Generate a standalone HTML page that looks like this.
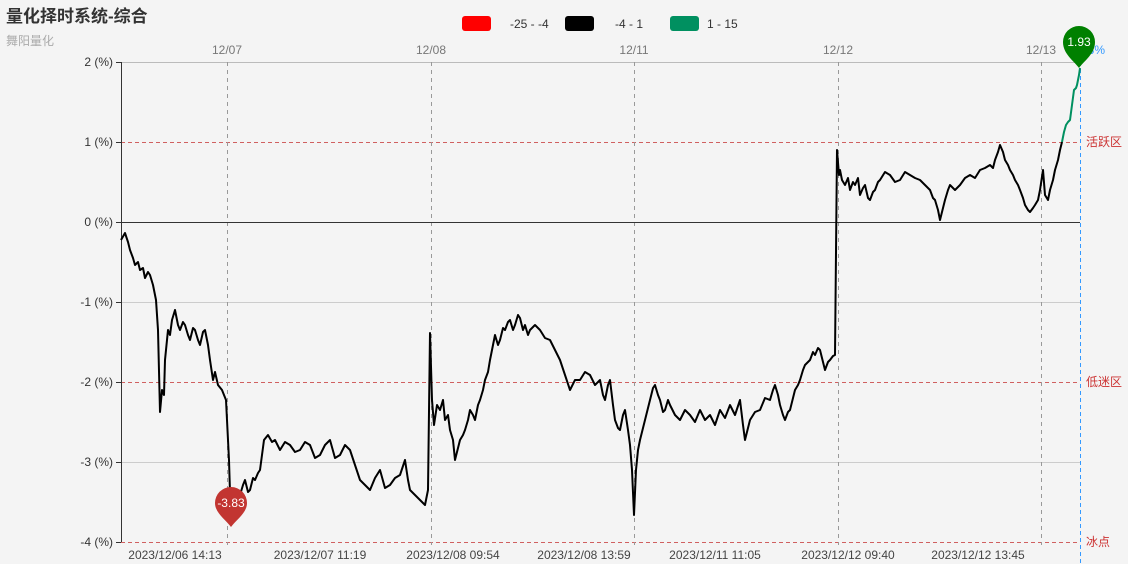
<!DOCTYPE html>
<html><head><meta charset="utf-8"><style>
body{margin:0;background:#fff;}
svg{display:block;font-family:"Liberation Sans","Noto Sans CJK SC",sans-serif;}
</style></head><body>
<svg width="1128" height="578" viewBox="0 0 1128 578">
<rect x="0" y="0" width="1128" height="564" fill="#f4f4f4"/>
<text x="6" y="22" font-size="17" font-weight="bold" fill="#333">量化择时系统-综合</text>
<text x="6" y="45" font-size="12" fill="#aaa">舞阳量化</text>
<rect x="462" y="16" width="29" height="15" rx="3" fill="#f00"/>
<text x="510" y="28" font-size="12" fill="#333">-25 - -4</text>
<rect x="565" y="16" width="29" height="15" rx="3" fill="#000"/>
<text x="615" y="28" font-size="12" fill="#333">-4 - 1</text>
<rect x="670" y="16" width="29" height="15" rx="3" fill="#009060"/>
<text x="707" y="28" font-size="12" fill="#333">1 - 15</text>
<g stroke="#ccc" stroke-width="1">
<line x1="121" y1="62.5" x2="1080" y2="62.5" stroke="#bbb"/>
<line x1="121" y1="302.5" x2="1080" y2="302.5"/>
<line x1="121" y1="462.5" x2="1080" y2="462.5"/>
</g>
<g stroke="#d06060" stroke-width="1" stroke-dasharray="4,3">
<line x1="121" y1="142.5" x2="1080" y2="142.5"/>
<line x1="121" y1="382.5" x2="1080" y2="382.5"/>
<line x1="121" y1="542.5" x2="1080" y2="542.5"/>
</g>
<g stroke="#999" stroke-width="1" stroke-dasharray="4,4">
<line x1="227.5" y1="62" x2="227.5" y2="545"/>
<line x1="431.5" y1="62" x2="431.5" y2="545"/>
<line x1="634.5" y1="62" x2="634.5" y2="545"/>
<line x1="838.5" y1="62" x2="838.5" y2="545"/>
<line x1="1041.5" y1="62" x2="1041.5" y2="545"/>
</g>
<line x1="1080.5" y1="62" x2="1080.5" y2="564" stroke="#3399ff" stroke-dasharray="4,3"/>
<line x1="121" y1="222.5" x2="1080" y2="222.5" stroke="#333"/>
<line x1="121.5" y1="62" x2="121.5" y2="542" stroke="#333"/>
<g stroke="#333"><line x1="116" y1="62.5" x2="121" y2="62.5"/><line x1="116" y1="142.5" x2="121" y2="142.5"/><line x1="116" y1="222.5" x2="121" y2="222.5"/><line x1="116" y1="302.5" x2="121" y2="302.5"/><line x1="116" y1="382.5" x2="121" y2="382.5"/><line x1="116" y1="462.5" x2="121" y2="462.5"/><line x1="116" y1="542.5" x2="121" y2="542.5"/></g>
<g font-size="12" fill="#333" text-anchor="end">
<text x="113" y="66">2 (%)</text><text x="113" y="146">1 (%)</text><text x="113" y="226">0 (%)</text>
<text x="113" y="306">-1 (%)</text><text x="113" y="386">-2 (%)</text><text x="113" y="466">-3 (%)</text><text x="113" y="546">-4 (%)</text>
</g>
<g font-size="12" fill="#c33">
<text x="1086" y="146">活跃区</text><text x="1086" y="386">低迷区</text><text x="1086" y="546">冰点</text>
</g>
<g font-size="12" fill="#777" text-anchor="middle">
<text x="227" y="54">12/07</text><text x="431" y="54">12/08</text><text x="634" y="54">12/11</text><text x="838" y="54">12/12</text><text x="1041" y="54">12/13</text>
</g>
<text x="1088" y="54" font-size="12" fill="#3399ff" text-anchor="middle">1.93%</text>
<g font-size="12" fill="#444" text-anchor="middle">
<text x="175" y="559">2023/12/06 14:13</text><text x="320" y="559">2023/12/07 11:19</text><text x="453" y="559">2023/12/08 09:54</text>
<text x="584" y="559">2023/12/08 13:59</text><text x="715" y="559">2023/12/11 11:05</text><text x="848" y="559">2023/12/12 09:40</text><text x="978" y="559">2023/12/12 13:45</text>
</g>
<polyline fill="none" stroke="#000" stroke-width="2" stroke-linejoin="round" points="121,240 125,233 128,242 130,250 133,258 135,265 138,262 140,270 143,268 145,278 148,272 150,275 153,285 156,300 158,330 160,412 162,390 164,395 165,360 168,330 170,335 172,320 175,310 178,325 180,330 183,322 185,325 188,335 190,340 193,328 195,330 198,340 200,345 203,332 205,330 208,345 210,360 213,380 215,372 218,385 222,390 226,400 229,460 231,525 234,515 237,500 240,495 243,485 245,480 248,492 250,490 253,478 255,480 258,473 260,470 264,440 268,435 272,442 275,440 278,446 280,450 285,442 290,445 295,452 300,450 305,442 310,445 315,458 320,455 325,445 330,440 335,458 340,455 345,445 350,450 355,465 360,480 365,485 370,490 375,478 380,470 385,488 390,485 395,478 400,475 405,460 408,480 410,490 415,495 420,500 425,505 428,490 430,333 432,400 434,425 437,405 440,410 443,400 445,420 448,415 450,430 453,440 455,460 458,448 460,440 463,435 465,430 468,420 470,410 473,415 475,420 478,405 480,400 483,390 485,380 488,372 490,360 493,345 495,335 498,345 500,340 503,328 505,330 508,322 510,320 513,330 515,325 518,315 520,318 523,330 525,325 528,335 530,330 535,325 540,330 545,338 550,340 555,350 560,360 565,375 570,390 575,380 580,380 585,372 590,375 595,385 600,380 603,395 605,400 608,385 610,380 613,405 615,420 618,428 620,430 623,415 625,410 628,430 630,445 632,470 634,515 636,470 638,450 640,440 643,428 645,420 648,408 650,400 653,388 655,385 658,395 660,400 663,412 665,410 668,400 670,405 675,415 680,420 685,410 690,415 695,422 700,410 705,420 710,415 715,425 720,410 725,418 730,405 735,415 740,400 743,425 745,440 748,428 750,420 755,412 760,410 765,398 770,400 773,390 775,385 778,395 780,405 783,415 785,420 788,412 790,410 793,398 795,390 798,385 800,380 803,370 805,365 808,362 810,360 813,352 815,355 818,348 820,350 823,362 825,370 828,362 830,360 833,356 835,355 837,150 839,175 840,170 842,180 845,185 848,178 850,190 853,182 855,185 858,178 860,195 863,188 865,185 868,198 870,200 873,192 875,190 878,182 880,180 885,172 890,175 895,182 900,180 905,172 910,175 915,178 920,180 925,185 930,190 933,198 935,200 938,210 940,220 943,208 945,200 948,190 950,185 955,190 960,185 965,178 970,175 975,178 980,170 985,168 990,165 993,168 995,160 998,152 1000,145 1003,152 1005,160 1008,165 1010,170 1013,175 1015,180 1018,185 1020,190 1023,198 1025,205 1028,210 1030,212 1033,208 1035,205 1038,200 1040,190 1043,170 1045,195 1048,200 1050,190 1053,180 1055,170 1058,160 1060,150 1062,142"/>
<polyline fill="none" stroke="#009060" stroke-width="2" stroke-linejoin="round" points="1062,142 1064,132 1066,125 1068,122 1070,120 1072,105 1074,90 1076,88 1077,85 1079,75 1080,68"/>
<path d="M231,527 C226,520 215,513 215,503 A16,16 0 1 1 247,503 C247,513 236,520 231,527 Z" fill="#c23531"/>
<text x="231" y="507" font-size="12" fill="#fff" text-anchor="middle">-3.83</text>
<path d="M1079,68 C1074,61 1063,54 1063,42 A16,16 0 1 1 1095,42 C1095,54 1084,61 1079,68 Z" fill="#008000"/>
<text x="1079" y="46" font-size="12" fill="#fff" text-anchor="middle">1.93</text>
</svg>
</body></html>
